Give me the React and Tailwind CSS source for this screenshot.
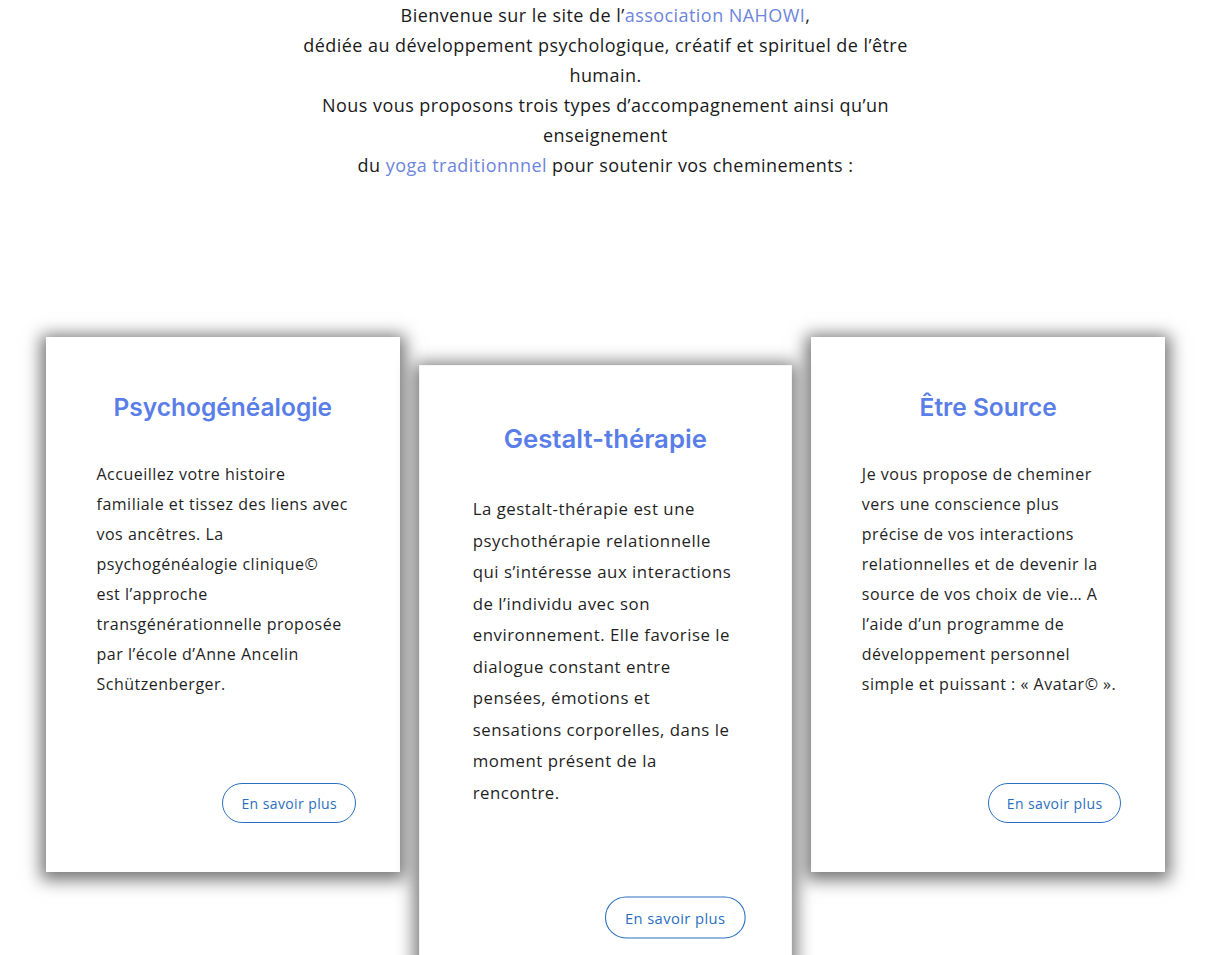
import React from 'react';

const body = { fontFamily: '"Open Sans", "Liberation Sans", sans-serif' };

// Card used for each accompaniment type
const Card = ({ title, lines, className = '' }) => (
  <div className={`flex flex-col bg-white pt-[56px] pb-[49px] shadow-[0_3px_16px_5px_rgba(0,0,0,0.55)] ${className}`}>
    <h2 className="text-center text-[24.5px] leading-[29px] font-semibold text-[#5a7ee8]" style={{ fontFamily: 'Inter, "Liberation Sans", sans-serif' }}>
      {title}
    </h2>
    <p className="mt-[37px] px-[51px] whitespace-nowrap text-[16px] tracking-[0.5px] leading-[30px] text-[#1f1f1f]" style={body}>
      {lines.map((l, i) => (
        <React.Fragment key={i}>
          {l}
          {i < lines.length - 1 && <br />}
        </React.Fragment>
      ))}
    </p>
    <button className="mt-[84px] mr-[44px] self-end h-10 rounded-full border border-[#2a6fc0] px-[18px] text-[14px] tracking-[0.4px] text-[#2a6fc0] bg-white" style={body}>
      En savoir plus
    </button>
  </div>
);

export default function App() {
  return (
    <div className="min-h-[955px] w-full overflow-hidden bg-white" style={body}>
      {/* Intro */}
      <p className="mx-auto whitespace-nowrap text-center text-[18px] tracking-[0.45px] leading-[30px] text-[#1a1a1a]">
        Bienvenue sur le site de l’<a className="text-[#6d85dc]">association NAHOWI</a>,<br />
        dédiée au développement psychologique, créatif et spirituel de l’être<br />
        humain.<br />
        Nous vous proposons trois types d’accompagnement ainsi qu’un<br />
        enseignement<br />
        du <a className="text-[#6d85dc]">yoga traditionnnel</a> pour soutenir vos cheminements :
      </p>

      {/* Cards */}
      <div className="mx-auto mt-[157px] grid w-[1120px] grid-cols-3 items-start gap-[28px]">
        <Card
          title="Psychogénéalogie"
          lines={[
            'Accueillez votre histoire',
            'familiale et tissez des liens avec',
            'vos ancêtres. La',
            'psychogénéalogie clinique©',
            'est l’approche',
            'transgénérationnelle proposée',
            'par l’école d’Anne Ancelin',
            'Schützenberger.',
          ]}
        />
        <Card
          className="mt-[43px] scale-[1.05]"
          title="Gestalt-thérapie"
          lines={[
            'La gestalt-thérapie est une',
            'psychothérapie relationnelle',
            'qui s’intéresse aux interactions',
            'de l’individu avec son',
            'environnement. Elle favorise le',
            'dialogue constant entre',
            'pensées, émotions et',
            'sensations corporelles, dans le',
            'moment présent de la',
            'rencontre.',
          ]}
        />
        <Card
          title="Être Source"
          lines={[
            'Je vous propose de cheminer',
            'vers une conscience plus',
            'précise de vos interactions',
            'relationnelles et de devenir la',
            'source de vos choix de vie… A',
            'l’aide d’un programme de',
            'développement personnel',
            'simple et puissant : « Avatar© ».',
          ]}
        />
      </div>
    </div>
  );
}
